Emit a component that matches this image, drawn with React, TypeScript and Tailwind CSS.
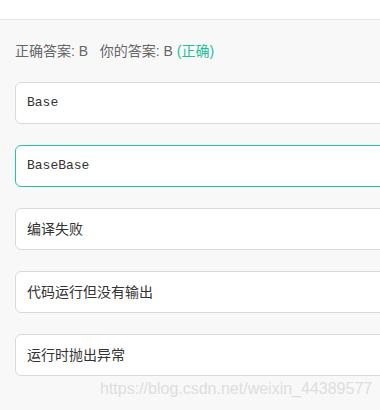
import React from 'react';

const options = [
  { text: 'Base', code: true, picked: false },
  { text: 'BaseBase', code: true, picked: true },
  { text: '编译失败', code: false, picked: false },
  { text: '代码运行但没有输出', code: false, picked: false },
  { text: '运行时抛出异常', code: false, picked: false },
];

const sans = "font-['Arial','Liberation_Sans','Noto_Sans_CJK_SC',sans-serif]";

export default function App() {
  return (
    <div className={`w-[380px] h-[410px] overflow-hidden bg-[#f8f8f8] ${sans}`}>
      <div className="h-[20px] bg-white border-b border-[#e6e6e6]" />
      <div className="pl-[15px] pt-[21px] text-[14px] leading-[20px] text-[#666]">
        正确答案: B&nbsp;&nbsp;&nbsp;你的答案: B <span className="text-[#1fbf9c]">(正确)</span>
      </div>
      <div className="mt-[21px] pl-[15px] flex flex-col gap-[21px]">
        {options.map((opt) => (
          <div
            key={opt.text}
            className={`w-[380px] h-[42px] rounded-[6px] bg-white border flex items-center pl-[11px] ${
              opt.picked ? 'border-[#25c3a0]' : 'border-[#d9d9d9]'
            }`}
          >
            {opt.code ? (
              <span className="font-['Courier_New','Liberation_Mono',monospace] text-[13px] text-[#333]">
                {opt.text}
              </span>
            ) : (
              <span className="text-[14px] text-[#333]">{opt.text}</span>
            )}
          </div>
        ))}
      </div>
      <div className="pl-[100px] mt-[3px] text-[16px] leading-[20px] text-[#dedede] whitespace-nowrap">
        https://blog.csdn.net/weixin_44389577
      </div>
    </div>
  );
}
